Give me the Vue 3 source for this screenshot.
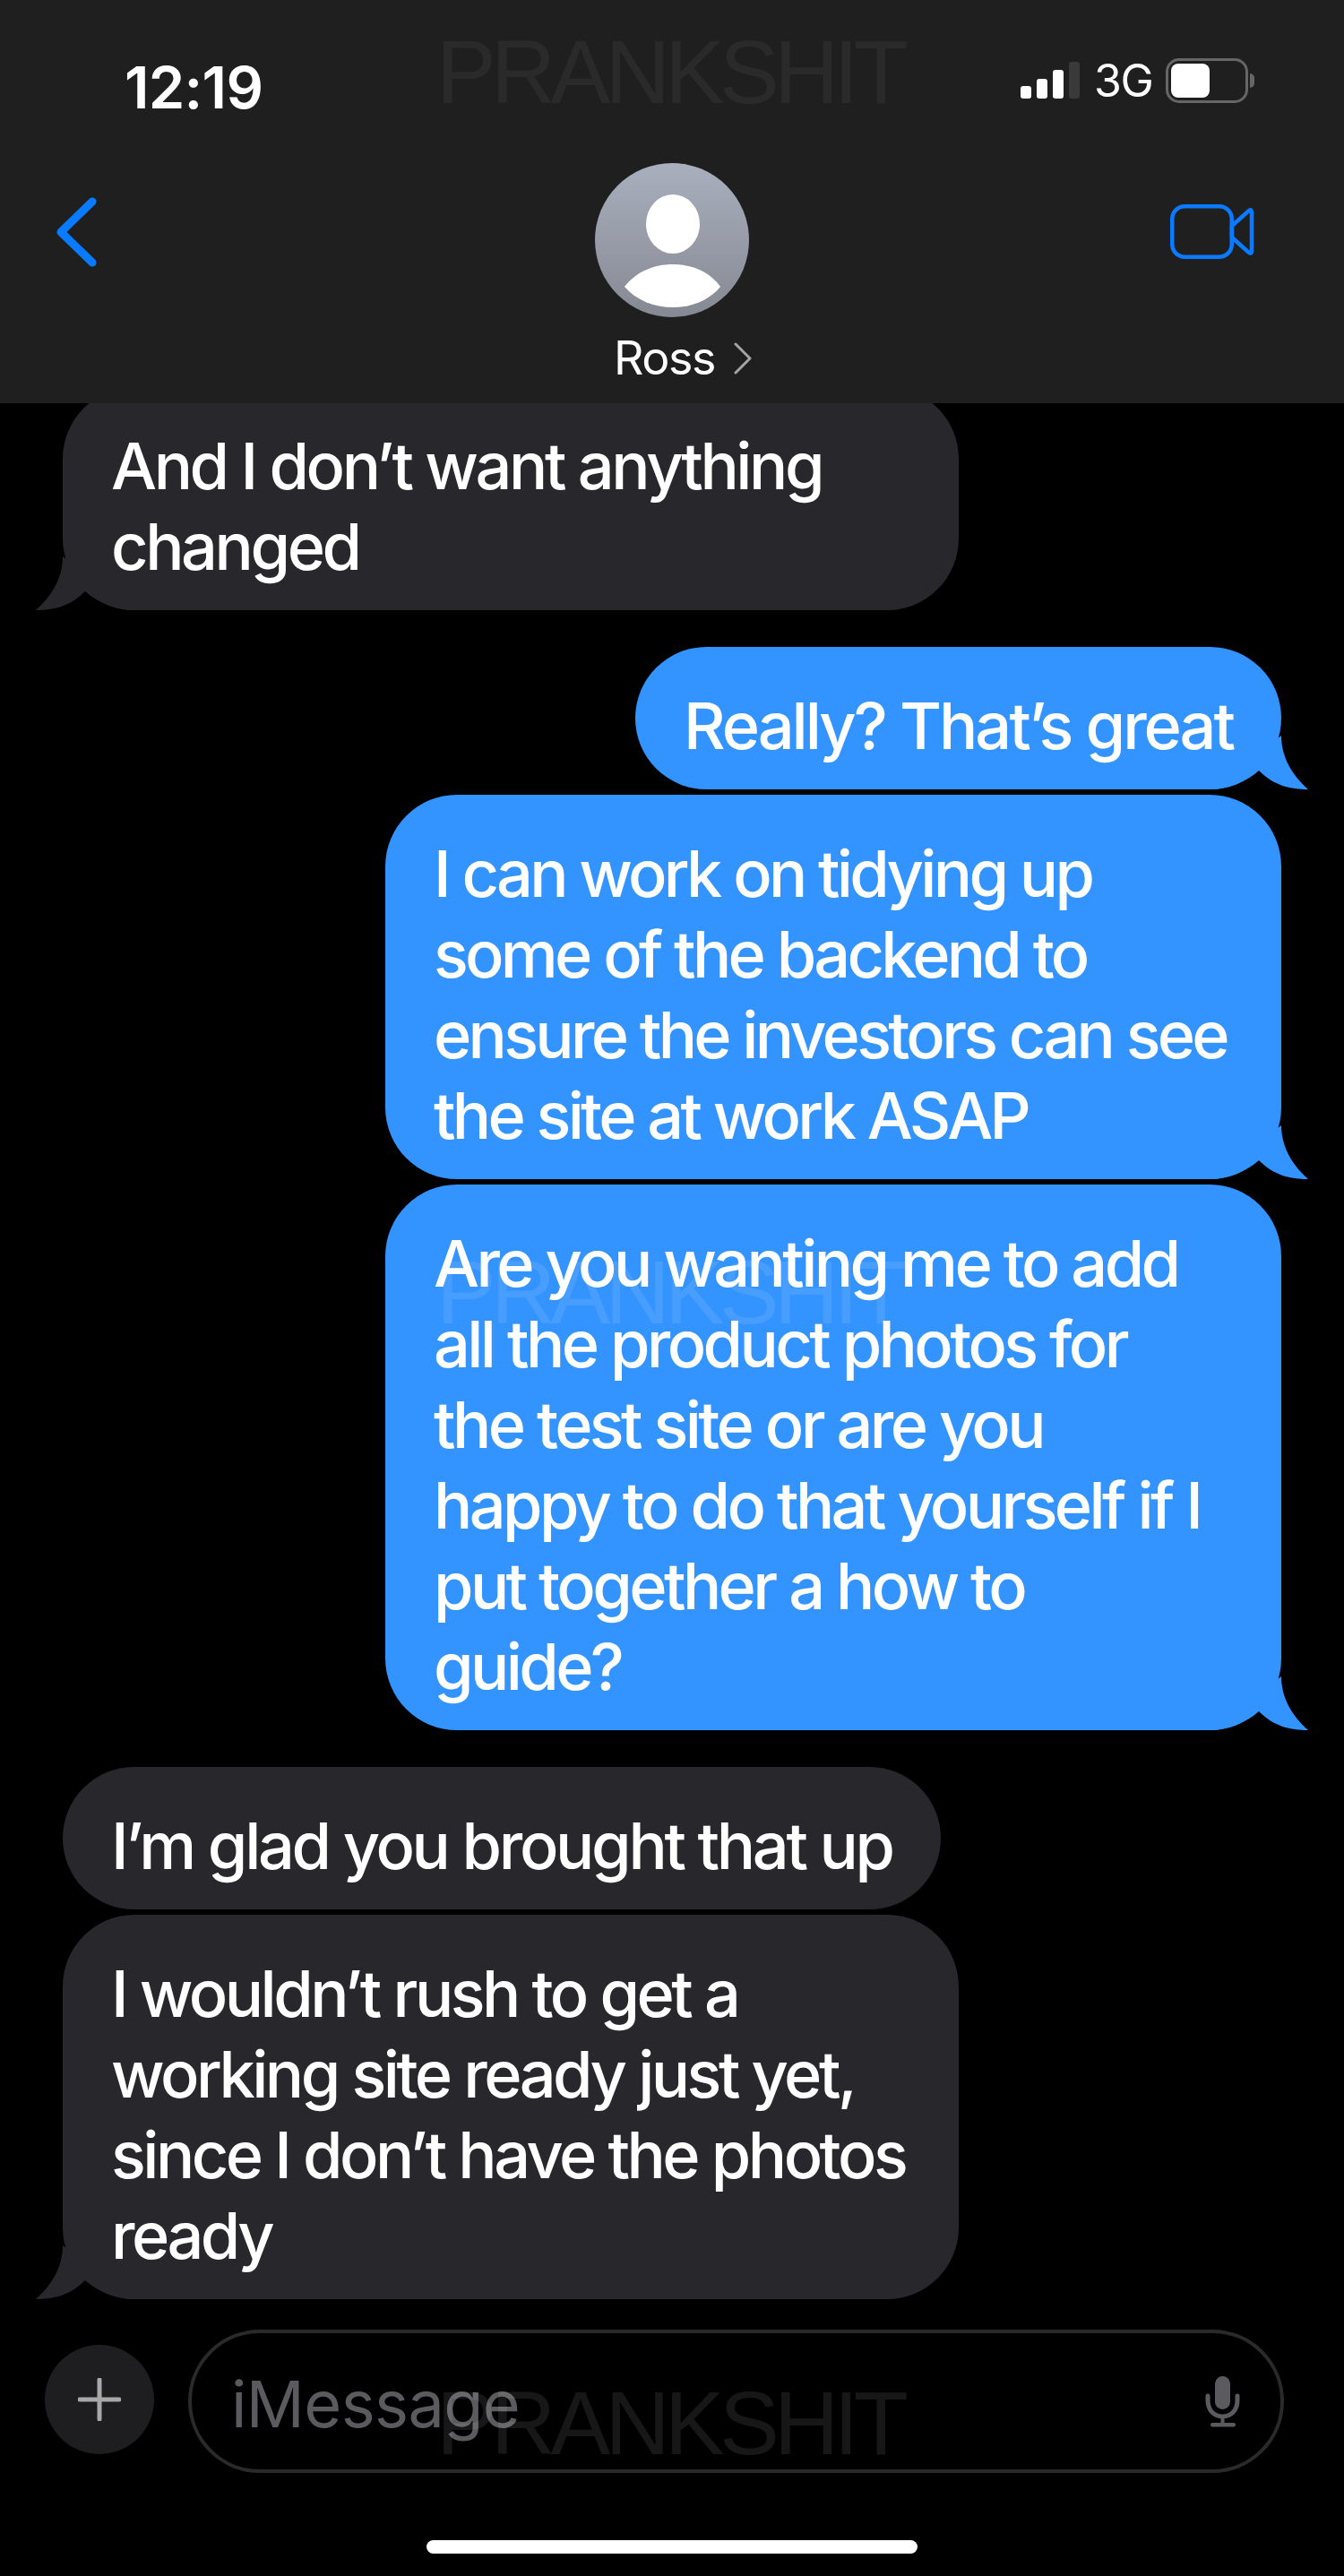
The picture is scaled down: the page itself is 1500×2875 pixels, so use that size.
<template>
  <div class="screen">
    <header class="top">
      <div class="status">
        <span class="time">12:19</span>
        <div class="status-right">
          <div class="signal">
            <i class="bar b1"></i>
            <i class="bar b2"></i>
            <i class="bar b3"></i>
            <i class="bar b4"></i>
          </div>
          <span class="net">3G</span>
          <div class="battery"><i class="charge"></i></div>
          <i class="nub"></i>
        </div>
      </div>
      <div class="nav">
        <svg class="back" width="46" height="78" viewBox="0 0 46 78" fill="none">
          <path d="M41 5 L6 39 L41 73" stroke="#0a7aff" stroke-width="9" stroke-linecap="round" stroke-linejoin="round" />
        </svg>
        <div class="contact">
          <svg width="172" height="172" viewBox="0 0 172 172">
            <defs>
              <linearGradient id="ava" x1="0" y1="0" x2="0" y2="1">
                <stop offset="0" stop-color="#a9afbd" />
                <stop offset="1" stop-color="#858993" />
              </linearGradient>
            </defs>
            <circle cx="86" cy="86" r="86" fill="url(#ava)" />
            <ellipse cx="87" cy="68" rx="30" ry="33" fill="#fff" />
            <path d="M33 138 C46 121 66 113 87 113 C108 113 128 121 140 138 C128 153 108 161 87 161 C66 161 46 153 33 138 Z" fill="#fff" />
          </svg>
          <div class="name">
            <span>Ross</span>
            <svg width="20" height="36" viewBox="0 0 20 36" fill="none">
              <path d="M2 2 L18 18 L2 34" stroke="#a5a5a5" stroke-width="3" stroke-linecap="round" stroke-linejoin="round" />
            </svg>
          </div>
        </div>
        <svg class="video" width="96" height="64" viewBox="0 0 96 64" fill="none" stroke="#0a7aff" stroke-width="4.5" stroke-linejoin="round">
          <rect x="4.25" y="3.25" width="66.5" height="56.5" rx="14" />
          <path d="M71 25 L90 8 Q93 6 93 10 V53 Q93 57 90 55 L71 38 Z" />
        </svg>
      </div>
    </header>

    <main class="thread">
      <div
        v-for="(m, i) in messages"
        :key="i"
        :class="['bubble', m.from, { wide: m.wide }]"
        :style="{ marginTop: m.gap + 'px', letterSpacing: m.track + 'px' }"
      >
        <div v-for="(line, j) in m.lines" :key="j" class="line">{{ line }}</div>
        <svg v-if="m.tail" class="tail" width="110" height="60" viewBox="0 0 110 60">
          <path d="M80 0 C80 24 92 44 110 60 C90 60 72 56 55 39 C40 52 20 60 0 60 Z" />
        </svg>
      </div>
    </main>

    <footer class="composer">
      <div class="plus">
        <svg width="48" height="48" viewBox="0 0 48 48" fill="none" stroke="#a8a8a8" stroke-width="5" stroke-linecap="round">
          <path d="M24 2 V46 M2 24 H46" />
        </svg>
      </div>
      <div class="input">
        <span class="placeholder">iMessage</span>
        <svg class="mic" width="42" height="58" viewBox="0 0 42 58" fill="none">
          <rect x="13" y="1" width="17" height="37" rx="8.5" fill="#5b5b5f" />
          <path d="M5 23 V28 C5 39 12 46 21.5 46 C31 46 38 39 38 28 V23" stroke="#5b5b5f" stroke-width="5" stroke-linecap="round" />
          <path d="M21.5 46 V54" stroke="#5b5b5f" stroke-width="4" />
          <rect x="8" y="53" width="28" height="4.5" rx="2.2" fill="#5b5b5f" />
        </svg>
      </div>
    </footer>
    <div class="home-wrap"><div class="home"></div></div>

    <span class="mark mark-top">PRANKSHIT</span>
    <span class="mark mark-mid">PRANKSHIT</span>
    <span class="mark mark-low">PRANKSHIT</span>
  </div>
</template>

<script setup>
const messages = [
  { from: 'them', wide: true, tail: true, gap: -18, track: -3.4, lines: ['And I don’t want anything', 'changed'] },
  { from: 'me', tail: true, gap: 41, track: -3, lines: ['Really? That’s great'] },
  { from: 'me', wide: true, tail: true, gap: 6, track: -3.7, lines: ['I can work on tidying up', 'some of the backend to', 'ensure the investors can see', 'the site at work ASAP'] },
  { from: 'me', wide: true, tail: true, gap: 6, track: -3.6, lines: ['Are you wanting me to add', 'all the product photos for', 'the test site or are you', 'happy to do that yourself if I', 'put together a how to', 'guide?'] },
  { from: 'them', gap: 41, track: -3.3, lines: ['I’m glad you brought that up'] },
  { from: 'them', wide: true, tail: true, gap: 6, track: -3.5, lines: ['I wouldn’t rush to get a', 'working site ready just yet,', 'since I don’t have the photos', 'ready'] },
]
</script>

<style>
html, body { background: #000; }
</style>

<style scoped>
.screen {
  position: relative;
  width: 1500px;
  height: 2875px;
  overflow: hidden;
  background: #000;
  color: #fff;
  font-family: Inter, "Liberation Sans", sans-serif;
}

/* barra superior */
.top {
  position: relative;
  z-index: 2;
  height: 450px;
  background: #1f1f1f;
}
.status {
  height: 130px;
  padding: 60px 100px 0 139px;
  box-sizing: border-box;
  display: flex;
  justify-content: space-between;
  align-items: flex-start;
}
.time {
  font-size: 65px;
  line-height: 76px;
  font-weight: 600;
  letter-spacing: -0.7px;
}
.status-right {
  display: flex;
  align-items: flex-start;
  margin-top: 5px;
}
.signal {
  display: flex;
  align-items: flex-end;
  gap: 6px;
  height: 41px;
  margin-top: 4px;
}
.bar {
  display: block;
  width: 12px;
  background: #fff;
  border-radius: 3px;
}
.b1 { height: 14px; }
.b2 { height: 22px; }
.b3 { height: 32px; }
.b4 { height: 41px; background: #3a3a3a; }
.net {
  margin-left: 16px;
  font-size: 50px;
  line-height: 50px;
  width: 80px;
  letter-spacing: -1.5px;
}
.battery {
  width: 92px;
  height: 50px;
  box-sizing: border-box;
  border: 3px solid #666;
  border-radius: 15px;
  padding: 3px;
}
.charge {
  display: block;
  width: 43px;
  height: 100%;
  background: #fff;
  border-radius: 8px;
}
.nub {
  width: 5px;
  height: 16px;
  margin: 17px 0 0 2px;
  background: #666;
  border-radius: 0 5px 5px 0;
}

.nav {
  display: grid;
  grid-template-columns: 1fr 172px 1fr;
  align-items: start;
}
.back {
  margin: 90px 0 0 62px;
}
.video {
  justify-self: end;
  margin: 97px 100px 0 0;
}
.contact {
  display: flex;
  flex-direction: column;
  align-items: center;
  padding-top: 52px;
}
.name {
  display: flex;
  align-items: center;
  gap: 21px;
  margin-top: 17px;
  padding-left: 24px;
  font-size: 52px;
  line-height: 58px;
  letter-spacing: -1.5px;
  white-space: nowrap;
}

/* conversación */
.thread {
  display: flex;
  flex-direction: column;
  height: 2116px;
  padding: 0 70px;
}
.bubble {
  position: relative;
  box-sizing: border-box;
  padding: 43px 54px 26px;
  border-radius: 80px;
  font-size: 72px;
  font-weight: 450;
  line-height: 90px;
  white-space: nowrap;
}
.bubble.wide { width: 1000px; }
.bubble.me {
  align-self: flex-end;
  background: #3393ff;
}
.bubble.them {
  align-self: flex-start;
  background: #28282c;
}
.line { position: relative; }
.tail {
  position: absolute;
  bottom: 0;
}
.me .tail {
  right: -30px;
  fill: #3393ff;
}
.them .tail {
  left: -30px;
  fill: #28282c;
  transform: scaleX(-1);
}

/* caja de texto */
.composer {
  position: absolute;
  left: 50px;
  top: 2600px;
  width: 1383px;
  display: flex;
  align-items: center;
  gap: 38px;
}
.plus {
  width: 122px;
  height: 122px;
  margin-bottom: 4px;
  flex: none;
  display: flex;
  align-items: center;
  justify-content: center;
  border-radius: 50%;
  background: #1e1e20;
}
.input {
  flex: 1;
  height: 160px;
  box-sizing: border-box;
  border: 4.5px solid #2a2a2a;
  border-radius: 80px;
  display: flex;
  align-items: center;
  justify-content: space-between;
  padding: 0 44px 0 44px;
}
.placeholder {
  margin-top: 4px;
  font-size: 72px;
  letter-spacing: -0.6px;
  color: #5b5b5f;
}
.home-wrap {
  position: absolute;
  left: 0;
  right: 0;
  top: 2835px;
  display: flex;
  justify-content: center;
}
.home {
  width: 548px;
  height: 15px;
  background: #fff;
  border-radius: 8px;
}

/* marca de agua */
.mark {
  position: absolute;
  z-index: 3;
  left: 487px;
  font-family: "Liberation Sans", Arial, sans-serif;
  font-size: 100px;
  line-height: 100px;
  letter-spacing: -5.7px;
  pointer-events: none;
  white-space: nowrap;
}
.mark-top { top: 30px; color: rgba(255, 255, 255, 0.05); }
.mark-mid { top: 1392px; color: rgba(255, 255, 255, 0.1); }
.mark-low { top: 2654px; color: rgba(255, 255, 255, 0.09); }
</style>
